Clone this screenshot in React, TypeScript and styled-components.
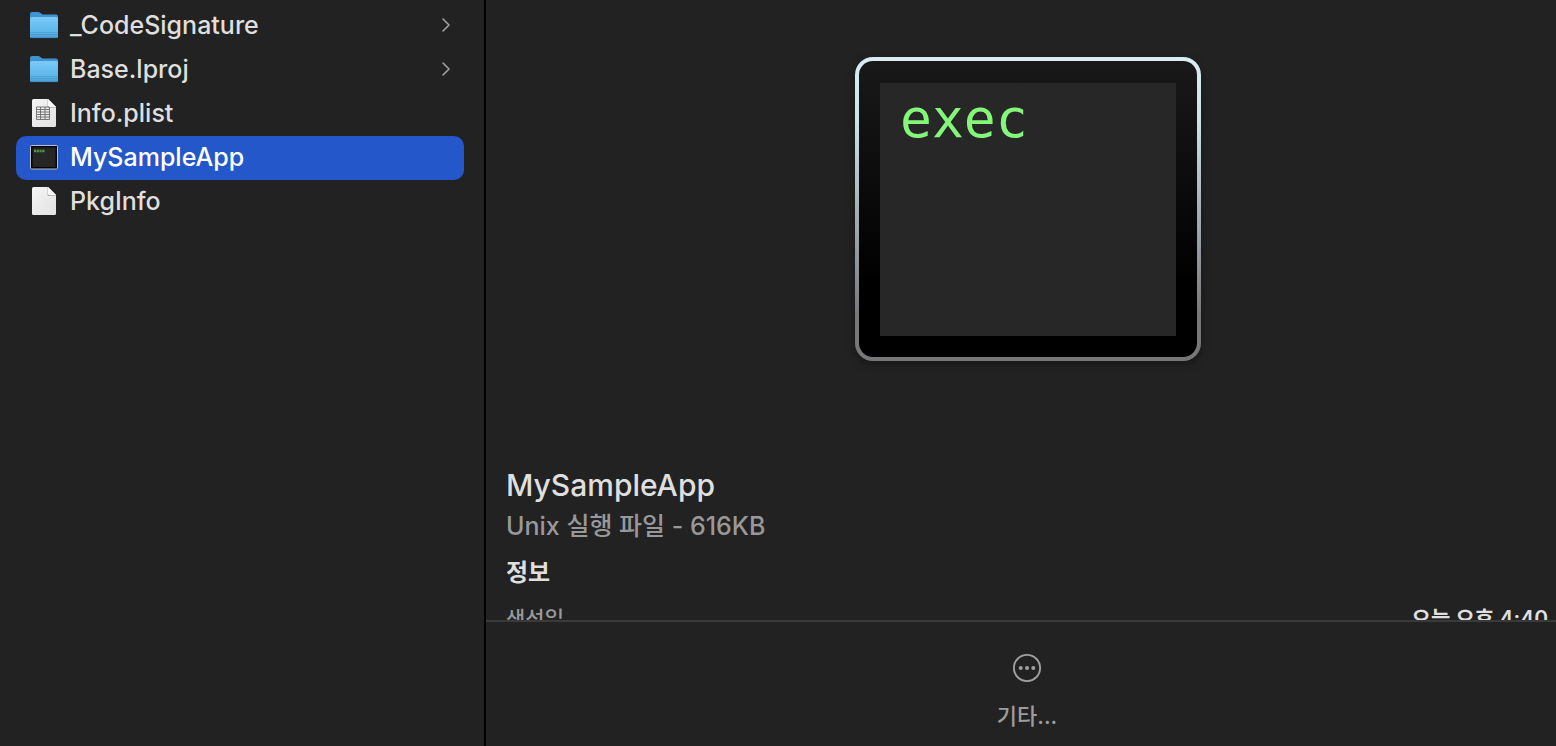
import React from "react";
import styled, { createGlobalStyle } from "styled-components";

const GlobalStyle = createGlobalStyle`
  * { box-sizing: border-box; }
  body {
    margin: 0;
    background: #222222;
    color: #dfdfdf;
    font-family: Inter, "Noto Sans CJK KR", sans-serif;
  }
`;

const Browser = styled.div`
  display: flex;
  height: 100vh;
  overflow: hidden;
`;

const Column = styled.nav`
  flex: 0 0 486px;
  padding: 4px 20px 0 16px;
  border-right: 2px solid #000000;
`;

const FileList = styled.ul`
  margin: 0;
  padding: 0;
  list-style: none;
`;

const FileRow = styled.button<{ $selected?: boolean }>`
  display: flex;
  align-items: center;
  gap: 12px;
  width: 100%;
  height: 44px;
  padding: 0 13px 2px 14px;
  border: 0;
  border-radius: 10px;
  background: ${(p) => (p.$selected ? "#2457c9" : "transparent")};
  color: ${(p) => (p.$selected ? "#ffffff" : "#dfdfdf")};
  font: inherit;
  font-size: 25px;
  font-weight: 500;
  line-height: 32px;
  text-align: left;

  svg { flex: none; }
`;

const FileName = styled.span`
  flex: 1;
`;

const Preview = styled.main`
  flex: 1;
  min-width: 0;
  display: flex;
  flex-direction: column;
`;

const Details = styled.section`
  flex: 1;
  min-height: 0;
  overflow: hidden;
  padding: 57px 8px 0 20px;
`;

const Artwork = styled.div`
  display: flex;
  justify-content: center;
  margin-bottom: 104px;
  padding-left: 2px;
`;

const Terminal = styled.div`
  width: 346px;
  height: 304px;
  padding: 22px 21px 21px;
  border: 4px solid transparent;
  border-radius: 18px;
  background:
    linear-gradient(#191919, #000000 75%) padding-box,
    linear-gradient(#d9edf5 0%, #cfe2ea 20%, #77777a 85%) border-box;
  box-shadow: 0 3px 8px rgba(0, 0, 0, 0.35);
`;

const Screen = styled.div`
  height: 100%;
  padding: 6px 20px;
  background: #272727;
  color: #84f67a;
  font-family: "DejaVu Sans Mono", monospace;
  font-size: 53px;
  line-height: 60px;
`;

const Title = styled.h1`
  margin: 0;
  font-size: 30px;
  font-weight: 500;
  line-height: 40px;
`;

const Kind = styled.p`
  margin: 0 0 6px;
  color: #98989a;
  font-size: 25px;
  font-weight: 500;
  line-height: 42px;
`;

const SectionTitle = styled.h2`
  margin: 0 0 12px;
  font-size: 24px;
  font-weight: 700;
  line-height: 40px;
`;

const Facts = styled.dl`
  display: flex;
  justify-content: space-between;
  margin: 0;
  font-size: 21px;
  line-height: 28px;
  font-weight: 500;
`;

const FactName = styled.dt`
  color: #98989a;
`;

const FactValue = styled.dd`
  margin: 0;
  font-weight: 600;
`;

const Actions = styled.footer`
  display: flex;
  justify-content: center;
  height: 126px;
  padding: 31px 8px 0 20px;
  border-top: 2px solid #3a3a3a;
`;

const MoreButton = styled.button`
  display: flex;
  flex-direction: column;
  align-items: center;
  gap: 17px;
  height: 79px;
  padding: 0;
  border: 0;
  background: none;
  color: #9c9c9c;
  font: inherit;
  font-size: 22px;
  font-weight: 500;
  line-height: 32px;
`;

const FolderIcon = () => (
  <svg width="28" height="30" viewBox="0 0 28 30" aria-hidden="true">
    <defs>
      <linearGradient id="folderFront" x1="0" y1="0" x2="0" y2="1">
        <stop offset="0" stopColor="#79cbf8" />
        <stop offset="0.7" stopColor="#5eb6ea" />
        <stop offset="1" stopColor="#4a9fd6" />
      </linearGradient>
    </defs>
    <path d="M0 4Q0 2 2 2H8Q9.500 2 10.500 3T13 4.500H26Q28 4.500 28 6.500V12H0Z" fill="#3f93cf" />
    <path d="M0 9Q0 7.500 1.500 7.500H26.500Q28 7.500 28 9V26.500Q28 28 26.500 28H1.500Q0 28 0 26.500Z" fill="url(#folderFront)" />
    <path d="M0 8.500Q0 7.600 1.500 7.600H26.500Q28 7.600 28 8.500" fill="none" stroke="#8ed6fb" strokeWidth="0.700" />
    <path d="M0 22.500H28M0 24.500H28" stroke="#4697cb" strokeWidth="0.600" />
    <path d="M0.500 27.700H27.500" stroke="#3b83b5" strokeWidth="0.700" />
  </svg>
);

const DocumentIcon = ({ table }: { table?: boolean }) => (
  <svg width="28" height="30" viewBox="0 0 28 30" aria-hidden="true">
    <defs>
      <linearGradient id="paper" x1="0" y1="0" x2="1" y2="1">
        <stop offset="0" stopColor="#f4f4f4" />
        <stop offset="1" stopColor="#e2e2e2" />
      </linearGradient>
      <linearGradient id="foldShade" x1="0" y1="1" x2="1" y2="0">
        <stop offset="0" stopColor="#a8a8a8" />
        <stop offset="1" stopColor="#dedede" />
      </linearGradient>
    </defs>
    <path d="M3.500 1H18L26 9V27.500Q26 29 24.500 29H3.500Q2 29 2 27.500V2.500Q2 1 3.500 1Z" fill="url(#paper)" />
    <path d="M17.500 1.500V8.500Q17.500 10 19 10H26V9L18 1Z" fill="url(#foldShade)" />
    <path d="M18 1V7.500Q18 9 19.500 9H26Z" fill="#fbfbfb" />
    {table && (
      <path
        d="M6.500 9H19.500V21.500H6.500ZM6.500 11.500H19.500M6.500 14H19.500M6.500 16.500H19.500M6.500 19H19.500M10.500 9V21.500M15 9V21.500"
        fill="none"
        stroke="#6c6c6c"
        strokeWidth="0.900"
      />
    )}
  </svg>
);

const ExecutableIcon = () => (
  <svg width="28" height="30" viewBox="0 0 28 30" aria-hidden="true">
    <rect x="0.500" y="3.500" width="27" height="23.500" rx="0.800" fill="#050505" stroke="#b9c1c6" />
    <rect x="2.500" y="5.500" width="23" height="19.500" fill="#262626" />
    <path d="M4 9H6.200M6.800 9H8.800M9.500 9H11.500M12.200 9H14.500" stroke="#4f9a4b" strokeWidth="2.400" />
  </svg>
);

const Chevron = () => (
  <svg width="10" height="14" viewBox="0 0 10 14" aria-hidden="true">
    <path d="M2 1L8 7L2 13" fill="none" stroke="#a0a0a0" strokeWidth="1.600" strokeLinecap="round" strokeLinejoin="round" />
  </svg>
);

const EllipsisCircle = () => (
  <svg width="30" height="30" viewBox="0 0 30 30" aria-hidden="true">
    <circle cx="15" cy="15" r="13.100" fill="none" stroke="#a0a0a0" strokeWidth="1.900" />
    <g fill="#a0a0a0">
      <circle cx="8.700" cy="15" r="2" />
      <circle cx="15" cy="15" r="2" />
      <circle cx="21.300" cy="15" r="2" />
    </g>
  </svg>
);

const files = [
  { name: "_CodeSignature", icon: <FolderIcon />, folder: true },
  { name: "Base.lproj", icon: <FolderIcon />, folder: true },
  { name: "Info.plist", icon: <DocumentIcon table /> },
  { name: "MySampleApp", icon: <ExecutableIcon />, selected: true },
  { name: "PkgInfo", icon: <DocumentIcon /> },
];

export default function App() {
  return (
    <Browser>
      <GlobalStyle />
      <Column>
        <FileList>
          {files.map((file) => (
            <li key={file.name}>
              <FileRow type="button" $selected={file.selected}>
                {file.icon}
                <FileName>{file.name}</FileName>
                {file.folder && <Chevron />}
              </FileRow>
            </li>
          ))}
        </FileList>
      </Column>
      <Preview>
        <Details>
          <Artwork>
            <Terminal>
              <Screen>exec</Screen>
            </Terminal>
          </Artwork>
          <Title>MySampleApp</Title>
          <Kind>Unix 실행 파일 - 616KB</Kind>
          <SectionTitle>정보</SectionTitle>
          <Facts>
            <FactName>생성일</FactName>
            <FactValue>오늘 오후 4:40</FactValue>
          </Facts>
        </Details>
        <Actions>
          <MoreButton type="button">
            <EllipsisCircle />
            기타...
          </MoreButton>
        </Actions>
      </Preview>
    </Browser>
  );
}
